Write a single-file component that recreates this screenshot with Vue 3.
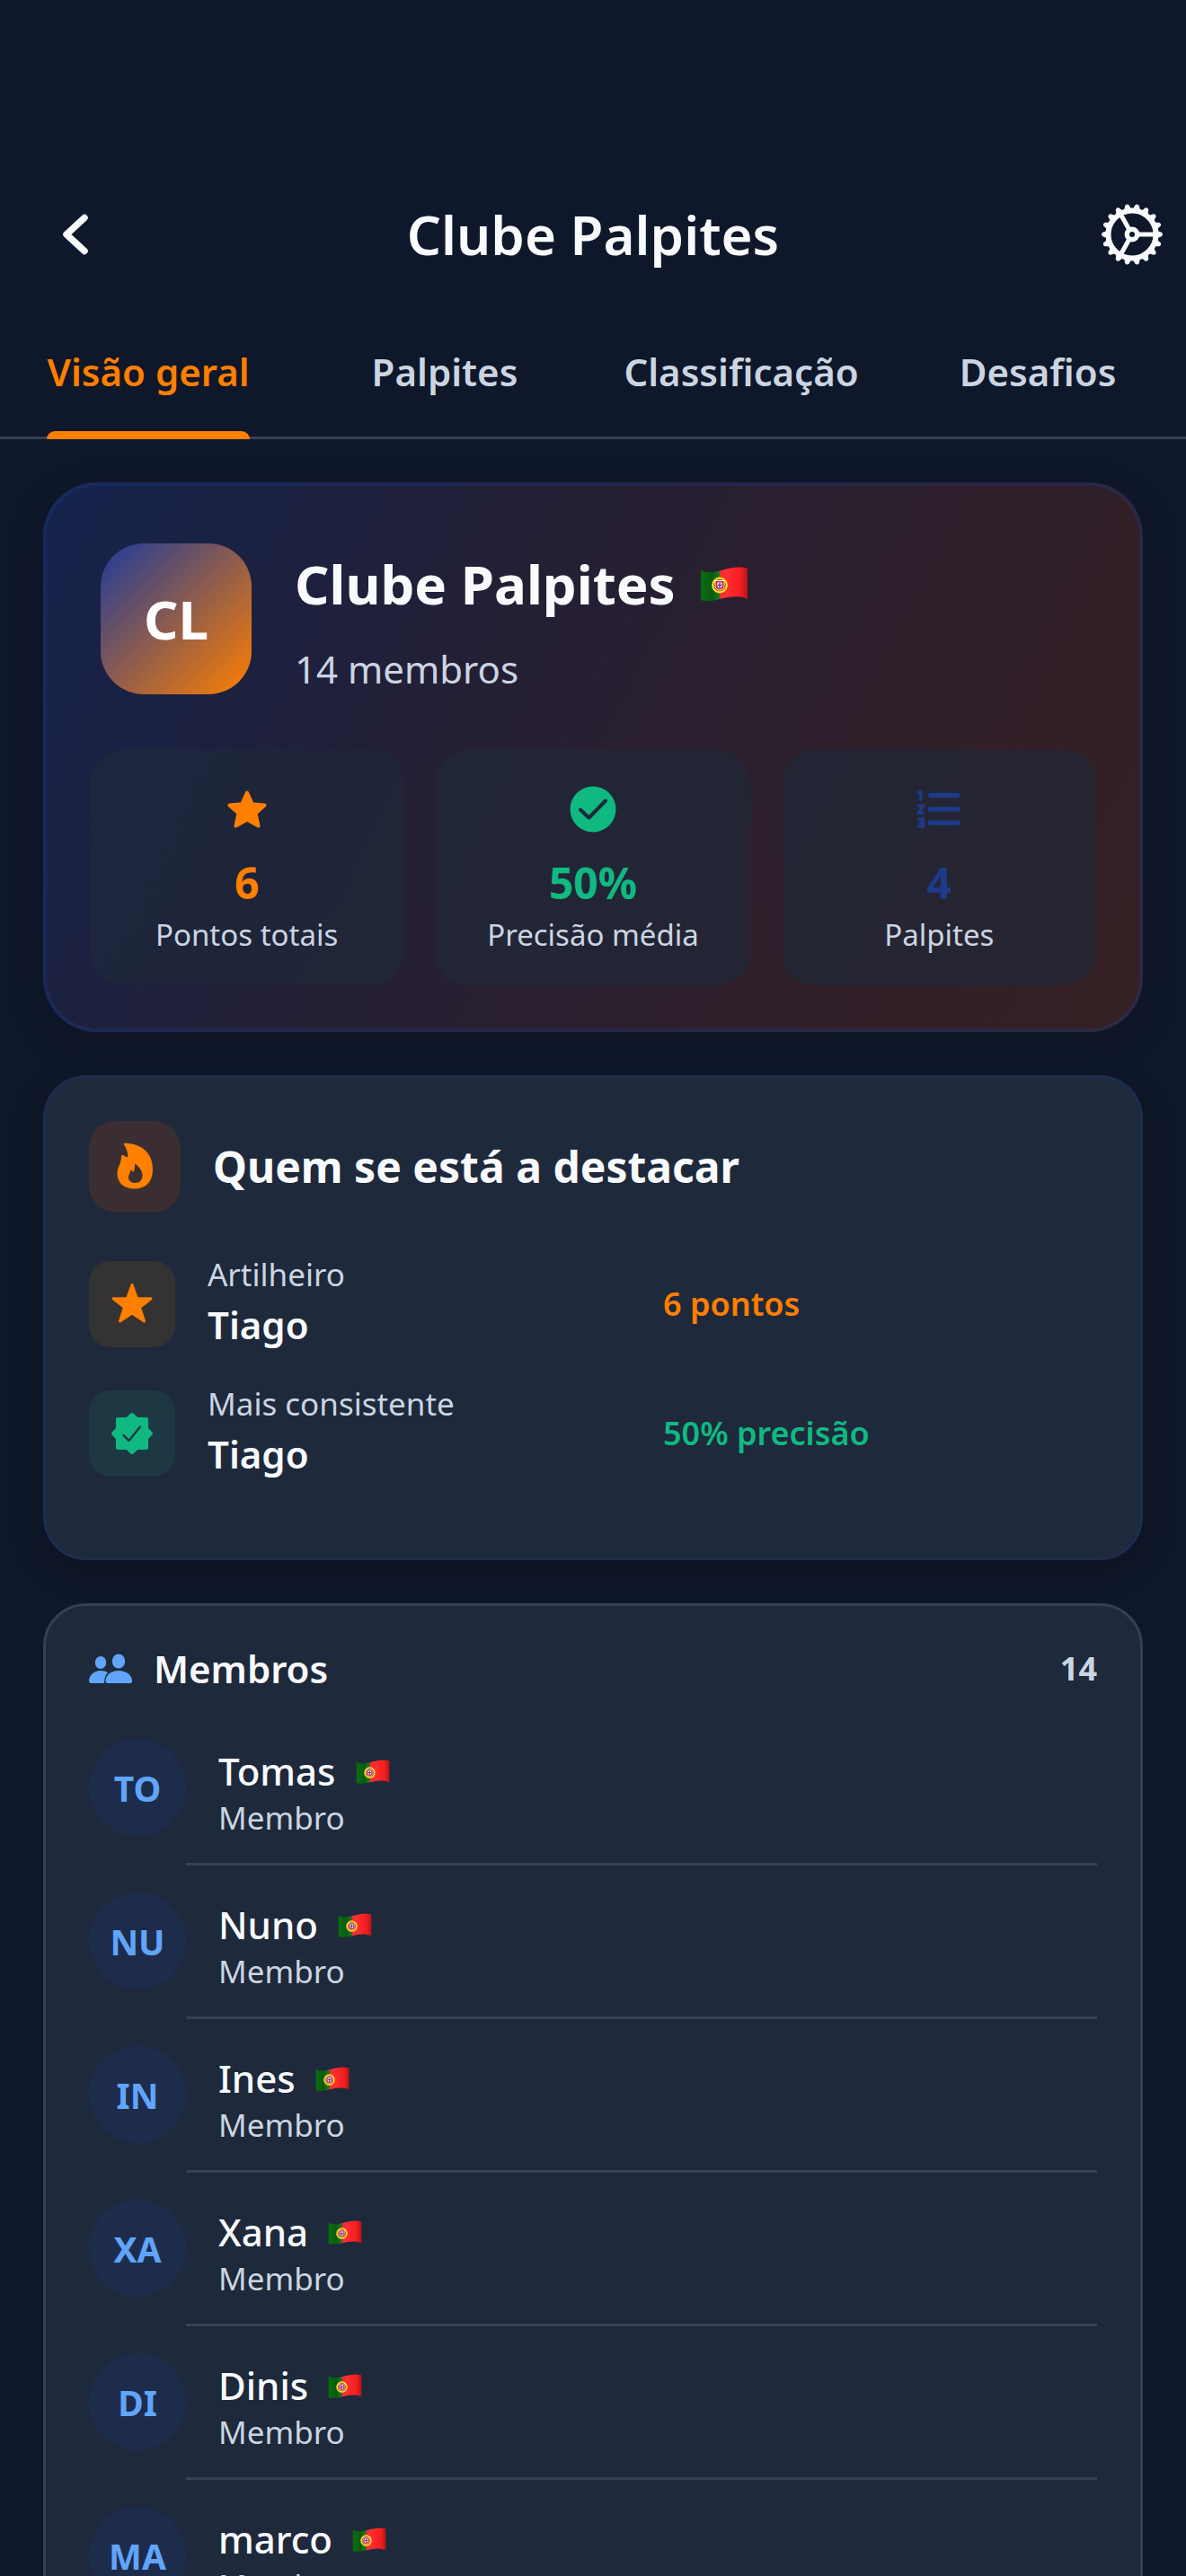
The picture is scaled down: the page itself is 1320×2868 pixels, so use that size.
<template>
  <div class="screen">
    <header class="topbar">
      <button class="icon-btn" type="button" aria-label="Voltar">
        <svg class="nav-icon" viewBox="0 0 72 72" aria-hidden="true">
          <path d="M46 17.500L26 36L46 54.500" fill="none" stroke="currentColor" stroke-width="7.500" stroke-linecap="round" stroke-linejoin="round" />
        </svg>
      </button>
      <h1 class="topbar-title">{{ club.name }}</h1>
      <button class="icon-btn" type="button" aria-label="Definições">
        <svg class="nav-icon" viewBox="0 0 72 72" aria-hidden="true">
          <g fill="none" stroke="currentColor">
            <circle cx="36" cy="36" r="26.500" stroke-width="6" />
            <circle cx="36" cy="36" r="5.700" stroke-width="5.400" />
            <path d="M43 36H61M32.500 30L23.500 14M32.500 42L23.500 58" stroke-width="5" />
          </g>
          <path
            v-for="n in 18"
            :key="n"
            d="M32 8L33.800 3.200Q36 0.800 38.200 3.200L40 8Z"
            fill="currentColor"
            :transform="`rotate(${n * 20 + 10} 36 36)`"
          />
        </svg>
      </button>
    </header>

    <nav class="tabs">
      <button
        v-for="tab in tabs"
        :key="tab"
        type="button"
        class="tab"
        :class="{ active: tab === activeTab }"
        @click="activeTab = tab"
      >
        <span class="tab-label">{{ tab }}</span>
      </button>
    </nav>

    <main class="content">
      <section class="card hero">
        <div class="hero-head">
          <div class="club-avatar">CL</div>
          <div class="club-info">
            <h2 class="club-name">
              {{ club.name }}
              <svg class="flag flag-lg" viewBox="0 0 54 38" role="img" aria-label="Portugal"><use href="#flag-pt" /></svg>
            </h2>
            <p class="club-members">{{ club.members }} membros</p>
          </div>
        </div>

        <div class="stats">
          <div v-for="s in stats" :key="s.label" class="stat" :class="s.tone">
            <svg class="stat-icon" viewBox="0 0 60 60" aria-hidden="true">
              <use v-if="s.icon === 'star'" href="#icon-star" />
              <template v-else-if="s.icon === 'check'">
                <circle cx="30" cy="30" r="25.500" fill="currentColor" />
                <path d="M16 30.500L25.500 39.500L44 20.500" fill="none" stroke="#20283a" stroke-width="4" stroke-linecap="round" stroke-linejoin="round" />
              </template>
              <g v-else fill="none" stroke="currentColor">
                <path d="M20.500 14.500H51M20.500 30H51M20.500 45H51" stroke-width="5.500" stroke-linecap="round" />
                <path d="M6 11H9.800V20.500M6 26.300H12.300L7.500 34H14M6 41H12.500V49H6M8 45H12.500" stroke-width="3.400" />
              </g>
            </svg>
            <strong class="stat-value">{{ s.value }}</strong>
            <span class="stat-label">{{ s.label }}</span>
          </div>
        </div>
      </section>

      <section class="card highlights">
        <div class="highlights-head">
          <span class="head-badge">
            <svg class="flame" viewBox="0 0 48 54" aria-hidden="true">
              <path
                fill="currentColor"
                fill-rule="evenodd"
                d="M12 2.500C11 1 12.500 .5 14 .7C31 1.500 44 11 44 30C44 44 36 51.500 24 51.500C12 51.500 4.500 45 4.500 34.500C4.500 27 9 24 9 15.500C9 13.800 10 13.700 11.500 14.500C14 15.500 15 17 16 16C17.500 14 14.500 6 12 2.500ZM25.500 24.500C24.500 23.500 24 24 24 25.500C24 29 23.500 31.500 22.300 33C21.500 32 20.500 30.500 19.500 30.800C19 31 19.300 32 19 33C18 35 17 36.500 17 38.500C17 42.500 20 45 24.500 45C29.500 45 32.500 41.500 32.500 36.500C32.500 31 28.500 27 25.500 24.500Z"
              />
            </svg>
          </span>
          <h2 class="highlights-title">Quem se está a destacar</h2>
        </div>

        <div v-for="h in highlights" :key="h.label" class="highlight" :class="h.tone">
          <span class="row-badge">
            <svg class="row-icon" viewBox="0 0 48 48" aria-hidden="true">
              <path
                v-if="h.icon === 'star'"
                d="M24 2.500L29.300 17.500L45 17.800L32.500 27.500L37.500 43L24 34L10.500 43L15.500 27.500L3 17.800L18.700 17.500Z"
                fill="currentColor"
                stroke="currentColor"
                stroke-width="3"
                stroke-linejoin="round"
              />
              <template v-else>
                <path
                  d="M24 3L29.500 8H40V18.500L45 24L40 29.500V40H29.500L24 45L18.500 40H8V29.500L3 24L8 18.500V8H18.500Z"
                  fill="currentColor"
                  stroke="currentColor"
                  stroke-width="4"
                  stroke-linejoin="round"
                />
                <path d="M14.500 26L20.500 32L33 16.500" fill="none" stroke="#1e3a43" stroke-width="2.500" stroke-linecap="round" stroke-linejoin="round" />
              </template>
            </svg>
          </span>
          <div class="highlight-body">
            <div class="highlight-text">
              <p class="highlight-label">{{ h.label }}</p>
              <p class="highlight-name">{{ h.name }}</p>
            </div>
            <p class="highlight-value">{{ h.value }}</p>
          </div>
        </div>
      </section>

      <section class="card members">
        <div class="members-head">
          <svg class="people" viewBox="0 0 48 36" aria-hidden="true">
            <g fill="currentColor">
              <ellipse cx="13" cy="11" rx="6.200" ry="7" />
              <ellipse cx="33" cy="9.500" rx="7.200" ry="8" />
              <path d="M0 32C0 25 5.500 20 13 20C16.500 20 19 20.700 21 22C18.500 25 17 28.500 17 34H2.500Q0 34 0 32Z" />
              <path d="M18.500 31.500C18.500 25 24.500 20 33 20C41.500 20 48 25 48 31.500Q48 34 45.500 34H21Q18.500 34 18.500 31.500Z" />
            </g>
          </svg>
          <h2 class="members-title">Membros</h2>
          <span class="members-count">{{ club.members }}</span>
        </div>

        <ul class="member-list">
          <li v-for="m in members" :key="m" class="member">
            <span class="member-avatar">{{ initials(m) }}</span>
            <div class="member-info">
              <p class="member-name">
                {{ m }}
                <svg class="flag" viewBox="0 0 54 38" role="img" aria-label="Portugal"><use href="#flag-pt" /></svg>
              </p>
              <p class="member-role">Membro</p>
            </div>
          </li>
        </ul>
      </section>
    </main>

    <!-- shared shapes -->
    <svg class="sprite" aria-hidden="true">
      <defs>
        <linearGradient id="flag-shade" x1="0" x2="1" y1="0" y2="0">
          <stop offset="0" stop-color="#000" stop-opacity="0.1" />
          <stop offset="0.25" stop-color="#000" stop-opacity="0.25" />
          <stop offset="0.6" stop-color="#fff" stop-opacity="0.06" />
          <stop offset="0.85" stop-color="#000" stop-opacity="0.04" />
          <stop offset="1" stop-color="#000" stop-opacity="0.3" />
        </linearGradient>
      </defs>
      <symbol id="flag-pt" viewBox="0 0 54 38">
        <path d="M1 3.500C6 7 14 6.500 22 4.500V36C15 38 8 39 1 37Z" fill="#0b7a12" />
        <path d="M22 4.500C33 1.500 43 -1.500 53 2V36C44 31.500 32 33.500 22 36Z" fill="#ff1f22" />
        <path d="M1 3.500C6 7 14 6.500 22 4.500C33 1.500 43 -1.500 53 2V36C44 31.500 32 33.500 22 36C15 38 8 39 1 37Z" fill="url(#flag-shade)" />
        <circle cx="22" cy="20.500" r="7.800" fill="#7a3a16" stroke="#ffe11a" stroke-width="2.200" />
        <path d="M17 15.500H27V21.500C27 27.500 17 27.500 17 21.500Z" fill="#d81e2c" stroke="#fff" stroke-width="1" />
        <path d="M19.500 17.500H24.500V21.500C24.500 24.500 19.500 24.500 19.500 21.500Z" fill="#fff" />
        <path d="M22 18V23.500M20 20.500H24" stroke="#2b46a8" stroke-width="1.400" />
      </symbol>
      <symbol id="icon-star" viewBox="0 0 60 60">
        <path
          d="M30 11.500L35.800 24.300L49.500 25.500L39.500 34.500L42.500 48.500L30 41.500L17.500 48.500L20.500 34.500L10.500 25.500L24.200 24.300Z"
          fill="currentColor"
          stroke="currentColor"
          stroke-width="4"
          stroke-linejoin="round"
        />
      </symbol>
    </svg>
  </div>
</template>

<script setup>
import { ref } from "vue";

const club = { name: "Clube Palpites", members: 14 };

const tabs = ["Visão geral", "Palpites", "Classificação", "Desafios"];
const activeTab = ref("Visão geral");

const stats = [
  { icon: "star", value: "6", label: "Pontos totais", tone: "orange" },
  { icon: "check", value: "50%", label: "Precisão média", tone: "green" },
  { icon: "list", value: "4", label: "Palpites", tone: "blue" },
];

const highlights = [
  { icon: "star", label: "Artilheiro", name: "Tiago", value: "6 pontos", tone: "orange" },
  { icon: "verified", label: "Mais consistente", name: "Tiago", value: "50% precisão", tone: "green" },
];

const members = ["Tomas", "Nuno", "Ines", "Xana", "Dinis", "marco"];

function initials(name) {
  return name.slice(0, 2).toUpperCase();
}
</script>

<style>
html,
body {
  margin: 0;
  background: #0f172a;
}
</style>

<style scoped>
.screen {
  display: flex;
  flex-direction: column;
  height: 100vh;
  box-sizing: border-box;
  padding-top: 186px;
  overflow: hidden;
  background: #0f172a;
  color: #f8fafc;
  font-family: "Noto Sans", sans-serif;
}

h1,
h2,
p,
ul {
  margin: 0;
  padding: 0;
}

button {
  margin: 0;
  padding: 0;
  border: 0;
  background: none;
  color: inherit;
  font: inherit;
  cursor: pointer;
}

svg {
  display: block;
  flex-shrink: 0;
}

.sprite {
  position: absolute;
  width: 0;
  height: 0;
}

.topbar {
  display: grid;
  grid-template-columns: 1fr auto 1fr;
  align-items: center;
  height: 150px;
  padding: 0 24px;
  flex-shrink: 0;
}

.icon-btn:first-child {
  justify-self: start;
  padding-left: 24px;
}

.icon-btn:last-child {
  justify-self: end;
}

.nav-icon {
  width: 72px;
  height: 72px;
}

.topbar-title {
  font-size: 60px;
  line-height: 84px;
  font-weight: 600;
}

.tabs {
  display: grid;
  grid-template-columns: repeat(4, 1fr);
  height: 150px;
  border-bottom: 3px solid #334155;
  flex-shrink: 0;
}

.tab {
  display: flex;
  justify-content: center;
  font-size: 42px;
  line-height: 156px;
  font-weight: 600;
  color: #cbd5e1;
}

.tab-label {
  position: relative;
  height: 153px;
}

.tab.active {
  color: #ff7f00;
}

.tab.active .tab-label::after {
  content: "";
  position: absolute;
  right: 0;
  bottom: 0;
  left: 0;
  height: 9px;
  border-radius: 9px 9px 0 0;
  background: #ff7f00;
}

.content {
  display: flex;
  flex-direction: column;
  gap: 48px;
  flex: 1;
  min-height: 0;
  padding: 48px;
  overflow-y: auto;
  scrollbar-width: none;
}

.card {
  flex-shrink: 0;
  box-sizing: border-box;
  border: 3px solid #334155;
  border-radius: 48px;
  padding: 48px;
  background: #1e293b;
}

.hero {
  border: 4px solid rgba(30, 58, 138, 0.3);
  border-radius: 60px;
  background: linear-gradient(117deg, #14234c 0%, #241f34 40%, #2e1f2b 68%, #352022 100%) border-box;
  box-shadow: 0 12px 36px rgba(10, 20, 30, 0.3);
}

.hero-head {
  display: flex;
  align-items: flex-start;
  gap: 48px;
  padding: 16px 12px 60px;
}

.club-avatar {
  display: flex;
  align-items: center;
  justify-content: center;
  width: 168px;
  height: 168px;
  flex-shrink: 0;
  border-radius: 48px;
  background: linear-gradient(135deg, #1e3a9a 0%, #ff7f00 100%);
  color: #fff;
  font-size: 60px;
  font-weight: 700;
}

.club-name {
  display: flex;
  align-items: center;
  gap: 27px;
  font-size: 60px;
  line-height: 90px;
  font-weight: 700;
}

.club-members {
  margin-top: 20px;
  color: #cbd5e1;
  font-size: 42px;
  line-height: 60px;
}

.flag {
  width: 38px;
  height: 27px;
}

.flag-lg {
  width: 54px;
  height: 38px;
}

.stats {
  display: grid;
  grid-template-columns: repeat(3, 1fr);
  gap: 36px;
}

.stat {
  display: flex;
  flex-direction: column;
  align-items: center;
  padding: 36px 12px 32px;
  border-radius: 36px;
  background: rgba(30, 41, 59, 0.6);
}

.stat-icon {
  width: 60px;
  height: 60px;
}

.stat-value {
  margin-top: 22px;
  font-size: 48px;
  line-height: 60px;
  font-weight: 700;
}

.stat-label {
  margin-top: 4px;
  color: #cbd5e1;
  font-size: 33px;
  line-height: 48px;
}

.orange {
  color: #ff7f00;
}

.green {
  color: #10b981;
}

.blue {
  color: #1e3a8a;
}

.highlights {
  border-color: #1e2c4f;
  padding-bottom: 81px;
  box-shadow: 0 12px 36px rgba(0, 0, 0, 0.2);
}

.highlights-head {
  display: flex;
  align-items: center;
  gap: 36px;
  margin-bottom: 45px;
}

.head-badge {
  display: flex;
  align-items: center;
  justify-content: center;
  width: 102px;
  height: 102px;
  border-radius: 30px;
  background: #3a2e33;
  color: #ff7f00;
}

.flame {
  width: 48px;
  height: 54px;
}

.highlights-title {
  font-size: 48px;
  line-height: 66px;
  font-weight: 700;
}

.highlight {
  display: flex;
  align-items: center;
  gap: 36px;
}

.highlight + .highlight {
  margin-top: 30px;
}

.row-badge {
  display: flex;
  align-items: center;
  justify-content: center;
  width: 96px;
  height: 96px;
  border-radius: 24px;
}

.orange .row-badge {
  background: #353234;
}

.green .row-badge {
  background: #1d3842;
}

.row-icon {
  width: 48px;
  height: 48px;
}

.highlight-body {
  display: grid;
  grid-template-columns: 1fr 1fr;
  align-items: center;
  gap: 24px;
  flex: 1;
}

.highlight-text {
  padding-bottom: 4px;
}

.highlight-label {
  margin-bottom: 2px;
  color: #cbd5e1;
  font-size: 35px;
  line-height: 48px;
}

.highlight-name {
  color: #f8fafc;
  font-size: 42px;
  line-height: 60px;
  font-weight: 600;
}

.highlight-value {
  font-size: 36px;
  line-height: 48px;
  font-weight: 600;
}

.members {
  padding-top: 40px;
}

.members-head {
  display: flex;
  align-items: center;
  margin-bottom: 48px;
}

.people {
  width: 48px;
  height: 36px;
  margin-right: 24px;
  color: #60a5fa;
}

.members-title {
  font-size: 42px;
  line-height: 60px;
  font-weight: 600;
}

.members-count {
  margin-left: auto;
  color: #cbd5e1;
  font-size: 36px;
  line-height: 48px;
  font-weight: 700;
}

.member-list {
  list-style: none;
}

.member {
  display: flex;
  gap: 36px;
}

.member-avatar {
  display: flex;
  align-items: center;
  justify-content: center;
  width: 108px;
  height: 108px;
  flex-shrink: 0;
  border-radius: 50%;
  background: #1e2c4c;
  color: #60a5fa;
  font-size: 39px;
  font-weight: 700;
}

.member + .member {
  margin-top: 30px;
}

.member-info {
  flex: 1;
  height: 141px;
  position: relative;
}

/* divider starts at the avatar's right edge */
.member-info::after {
  content: "";
  position: absolute;
  right: 0;
  bottom: 0;
  left: -36px;
  height: 3px;
  background: #374151;
}

.member-name {
  display: flex;
  align-items: center;
  gap: 22px;
  padding-top: 6px;
  font-size: 42px;
  line-height: 60px;
  font-weight: 500;
}

.member-role {
  color: #cbd5e1;
  font-size: 35px;
  line-height: 44px;
}
</style>
